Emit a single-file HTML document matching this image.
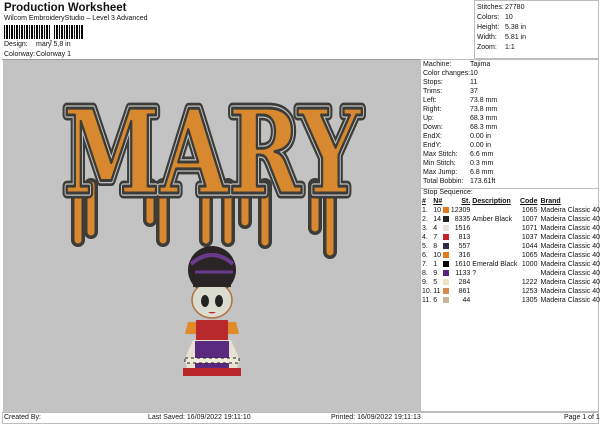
<!DOCTYPE html>
<html><head><meta charset="utf-8"><style>
*{margin:0;padding:0;box-sizing:border-box}
body{width:600px;height:424px;background:#fff;font-family:"Liberation Sans",Arial,sans-serif;color:#111;position:relative;overflow:hidden;font-size:7px}
.a{position:absolute;white-space:nowrap}
.box{position:absolute;border:1px solid #bdbdbd}
table{border-collapse:collapse}
td{font-size:7px;padding:0;height:9px;white-space:nowrap}
.sw{display:inline-block;width:6px;height:6px;vertical-align:middle}
</style></head><body>
<div class="a" style="left:4px;top:2px;font-size:11.5px;font-weight:bold">Production Worksheet</div>
<div class="a" style="left:4px;top:15px;font-size:7px">Wilcom EmbroideryStudio – Level 3 Advanced</div>
<div class="a" style="left:4px;top:25px;width:80px;height:14px;background:repeating-linear-gradient(90deg,#000 0 1px,#fff 1px 2px,#000 2px 4px,#fff 4px 5px)"></div>
<div class="a" style="left:50px;top:25px;width:3px;height:16px;background:#fff"></div>
<div class="a" style="left:50px;top:36px;font-size:7px;font-weight:bold">,</div>
<div class="a" style="left:4px;top:41px">Design:</div><div class="a" style="left:36px;top:41px">mary 5,8 in</div>
<div class="a" style="left:4px;top:51px">Colorway:</div><div class="a" style="left:36px;top:51px">Colorway 1</div>
<div class="box" style="left:474px;top:0;width:125px;height:59px"></div>
<div class="a" style="left:477px;top:3px;line-height:9.9px">Stitches:<br>Colors:<br>Height:<br>Width:<br>Zoom:</div>
<div class="a" style="left:505px;top:3px;line-height:9.9px">27780<br>10<br>5.38 in<br>5.81 in<br>1:1</div>
<div class="a" style="left:2px;top:59px;width:597px;height:1px;background:#9a9a9a"></div>
<div class="a" style="left:3px;top:60px;width:417px;height:352px;background:#c3c3c3"></div>
<div class="box" style="left:420px;top:59px;width:179px;height:353px"></div>
<div class="a" style="left:420px;top:188px;width:179px;height:1px;background:#bdbdbd"></div>
<div class="a" style="left:423px;top:60px;line-height:9px">Machine:<br>Color changes:<br>Stops:<br>Trims:<br>Left:<br>Right:<br>Up:<br>Down:<br>EndX:<br>EndY:<br>Max Stitch:<br>Min Stitch:<br>Max Jump:<br>Total Bobbin:</div>
<div class="a" style="left:470px;top:60px;line-height:9px">Tajima<br>10<br>11<br>37<br>73.8 mm<br>73.8 mm<br>68.3 mm<br>68.3 mm<br>0.00 in<br>0.00 in<br>6.6 mm<br>0.3 mm<br>6.8 mm<br>173.61ft</div>
<div class="a" style="left:423px;top:189px">Stop Sequence:</div>
<table class="a" style="left:422px;top:197px">
<tr style="font-weight:bold;text-decoration:underline"><td style="width:13px">#</td><td style="width:10px">N#</td><td style="width:8px"></td><td style="width:22px;text-align:right">St.</td><td style="width:49px;padding-left:2px">Description</td><td style="width:21px;text-align:right">Code</td><td style="padding-left:3px">Brand</td></tr>
<tr><td>1.</td><td>10</td><td><span class="sw" style="background:#e07a1a"></span></td><td style="text-align:right">12309</td><td></td><td style="text-align:right">1065</td><td style="padding-left:3px">Madeira Classic 40</td></tr>
<tr><td>2.</td><td>14</td><td><span class="sw" style="background:#222"></span></td><td style="text-align:right">8335</td><td style="padding-left:2px">Amber Black</td><td style="text-align:right">1007</td><td style="padding-left:3px">Madeira Classic 40</td></tr>
<tr><td>3.</td><td>4</td><td><span class="sw" style="background:#e8e4d8"></span></td><td style="text-align:right">1516</td><td></td><td style="text-align:right">1071</td><td style="padding-left:3px">Madeira Classic 40</td></tr>
<tr><td>4.</td><td>7</td><td><span class="sw" style="background:#c81e2a"></span></td><td style="text-align:right">813</td><td></td><td style="text-align:right">1037</td><td style="padding-left:3px">Madeira Classic 40</td></tr>
<tr><td>5.</td><td>8</td><td><span class="sw" style="background:#2c2e48"></span></td><td style="text-align:right">557</td><td></td><td style="text-align:right">1044</td><td style="padding-left:3px">Madeira Classic 40</td></tr>
<tr><td>6.</td><td>10</td><td><span class="sw" style="background:#e07a1a"></span></td><td style="text-align:right">316</td><td></td><td style="text-align:right">1065</td><td style="padding-left:3px">Madeira Classic 40</td></tr>
<tr><td>7.</td><td>1</td><td><span class="sw" style="background:#000"></span></td><td style="text-align:right">1610</td><td style="padding-left:2px">Emerald Black</td><td style="text-align:right">1000</td><td style="padding-left:3px">Madeira Classic 40</td></tr>
<tr><td>8.</td><td>9</td><td><span class="sw" style="background:#5a2080"></span></td><td style="text-align:right">1133</td><td style="padding-left:2px">?</td><td></td><td style="padding-left:3px">Madeira Classic 40</td></tr>
<tr><td>9.</td><td>5</td><td><span class="sw" style="background:#efe2c0"></span></td><td style="text-align:right">284</td><td></td><td style="text-align:right">1222</td><td style="padding-left:3px">Madeira Classic 40</td></tr>
<tr><td>10.</td><td>11</td><td><span class="sw" style="background:#d88a50"></span></td><td style="text-align:right">861</td><td></td><td style="text-align:right">1253</td><td style="padding-left:3px">Madeira Classic 40</td></tr>
<tr><td>11.</td><td>6</td><td><span class="sw" style="background:#c8b898"></span></td><td style="text-align:right">44</td><td></td><td style="text-align:right">1305</td><td style="padding-left:3px">Madeira Classic 40</td></tr>
</table>
<svg class="a" style="left:3px;top:60px" width="417" height="352">
<g stroke-linecap="round" fill="none">
<g stroke="#3c3d39" stroke-width="14">
<line x1="75" y1="125" x2="75" y2="180"/><line x1="88" y1="125" x2="88" y2="172"/><line x1="147" y1="125" x2="147" y2="160"/><line x1="160" y1="125" x2="160" y2="180"/><line x1="203" y1="125" x2="203" y2="180"/><line x1="225" y1="125" x2="225" y2="180"/><line x1="242" y1="125" x2="242" y2="162"/><line x1="262" y1="125" x2="262" y2="182"/><line x1="312" y1="125" x2="312" y2="168"/><line x1="327" y1="125" x2="327" y2="192"/>
</g>
<g stroke="#d8882e" stroke-width="7">
<line x1="75" y1="125" x2="75" y2="180"/><line x1="88" y1="125" x2="88" y2="172"/><line x1="147" y1="125" x2="147" y2="160"/><line x1="160" y1="125" x2="160" y2="180"/><line x1="203" y1="125" x2="203" y2="180"/><line x1="225" y1="125" x2="225" y2="180"/><line x1="242" y1="125" x2="242" y2="162"/><line x1="262" y1="125" x2="262" y2="182"/><line x1="312" y1="125" x2="312" y2="168"/><line x1="327" y1="125" x2="327" y2="192"/>
</g>
</g>
<text x="60" y="133" font-family="DejaVu Serif" font-weight="bold" font-size="116" textLength="298" lengthAdjust="spacingAndGlyphs" fill="#d8882e" stroke="#3c3d39" stroke-width="11" stroke-linejoin="round">MARY</text>
<text x="60" y="133" font-family="DejaVu Serif" font-weight="bold" font-size="116" textLength="298" lengthAdjust="spacingAndGlyphs" fill="#d8882e" stroke="#c3c3c3" stroke-width="5.5" stroke-linejoin="round">MARY</text>
<text x="60" y="133" font-family="DejaVu Serif" font-weight="bold" font-size="116" textLength="298" lengthAdjust="spacingAndGlyphs" fill="#d8882e" stroke="#3c3d39" stroke-width="3" stroke-linejoin="round">MARY</text>
<!-- character -->
<ellipse cx="209" cy="210" rx="24" ry="24" fill="#2a2426"/>
<path d="M188 204 Q209 186 230 204" stroke="#6a3a8a" stroke-width="4" fill="none"/>
<path d="M192 212 L230 212" stroke="#6a3a8a" stroke-width="3"/>
<ellipse cx="209" cy="240" rx="20" ry="18" fill="#d9dccf" stroke="#b07040" stroke-width="1.5"/>
<rect x="190" y="218" width="38" height="9" fill="#2a2426"/>
<ellipse cx="202" cy="241" rx="4" ry="6" fill="#222"/><ellipse cx="216" cy="241" rx="4" ry="6" fill="#222"/>
<path d="M205 252 Q209 255 213 252" fill="#c0202a"/>
<path d="M185 262 L233 262 L236 274 L182 274 Z" fill="#e08a28"/>
<rect x="193" y="260" width="32" height="22" fill="#b82a2c"/>
<path d="M190 280 L228 280 L236 298 L234 310 L184 310 L182 298 Z" fill="#e8e0d0"/>
<rect x="192" y="281" width="34" height="27" fill="#5a2a80"/>
<rect x="182" y="298" width="54" height="5" fill="#f0ead8" stroke="#222" stroke-width="1" stroke-dasharray="3 3"/>
<rect x="180" y="308" width="58" height="8" fill="#b8262a"/>
</svg>
<div class="a" style="left:2px;top:412px;width:597px;height:12px;border:1px solid #bdbdbd"></div>
<div class="a" style="left:4px;top:414px">Created By:</div>
<div class="a" style="left:148px;top:414px">Last Saved: 16/09/2022 19:11:10</div>
<div class="a" style="left:331px;top:414px">Printed: 16/09/2022 19:11:13</div>
<div class="a" style="left:564px;top:414px">Page 1 of 1</div>
</body></html>
